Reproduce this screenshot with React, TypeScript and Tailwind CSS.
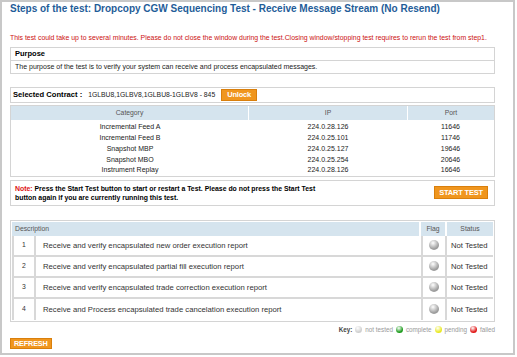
import React from "react";

const feeds = [
  { category: "Incremental Feed A", ip: "224.0.28.126", port: "11646" },
  { category: "Incremental Feed B", ip: "224.0.25.101", port: "11746" },
  { category: "Snapshot MBP", ip: "224.0.25.127", port: "19646" },
  { category: "Snapshot MBO", ip: "224.0.25.254", port: "20646" },
  { category: "Instrument Replay", ip: "224.0.28.126", port: "16646" },
];

const steps = [
  "Receive and verify encapsulated new order execution report",
  "Receive and verify encapsulated partial fill execution report",
  "Receive and verify encapsulated trade correction execution report",
  "Receive and Process encapsulated trade cancelation execution report",
];

function Ball({ color, size = 10 }: { color: string; size?: number }) {
  // small shaded sphere used for flags and key
  return (
    <span
      className="inline-block rounded-full shrink-0"
      style={{
        width: size,
        height: size,
        background: `radial-gradient(circle at 40% 30%, #ffffff 0%, ${color} 65%, ${color} 100%)`,
      }}
    />
  );
}

function OrangeButton({ children, className = "" }: { children: React.ReactNode; className?: string }) {
  return (
    <button
      className={`bg-[#f0961e] border border-[#d97f0c] text-white font-bold leading-none tracking-tight ${className}`}
    >
      {children}
    </button>
  );
}

export default function App() {
  return (
    <div className="w-[517px] h-[357px] bg-white font-['Liberation_Sans',Arial,sans-serif]">
      <div className="w-[515px] h-[355px] border-2 border-[#c8c8c8] px-[8px] overflow-hidden">
        <h1 className="text-[10px] font-bold text-[#1f5d99] leading-[14px] h-[17px]">
          Steps of the test: Dropcopy CGW Sequencing Test - Receive Message Stream (No Resend)
        </h1>

        <p className="mt-[14px] text-[6.9px] leading-[9px] text-[#cc1111] whitespace-nowrap">
          This test could take up to several minutes. Please do not close the window during the test.Closing window/stopping test requires to rerun the test from step1.
        </p>

        {/* Purpose */}
        <div className="mt-[5px] w-[485px] border border-[#d4d4d4]">
          <div className="h-[13px] px-[4px] flex items-center text-[7.5px] font-bold text-black border-b border-[#d4d4d4]">
            Purpose
          </div>
          <div className="h-[12px] px-[4px] flex items-center text-[7px] text-[#222]">
            The purpose of the test is to verify your system can receive and process encapsulated messages.
          </div>
        </div>

        {/* Selected contract */}
        <div className="mt-[13px] w-[485px] h-[16px] border border-[#d4d4d4] flex items-center px-[2px] gap-[4px]">
          <span className="text-[7.6px] font-bold text-black">Selected Contract :</span>
          <span className="text-[6.8px] text-[#222] ml-[2px]">1GLBU8,1GLBV8,1GLBU8-1GLBV8 - 845</span>
          <OrangeButton className="ml-[2px] h-[12px] px-[5px] text-[7.5px]">Unlock</OrangeButton>
        </div>

        {/* Feed table */}
        <div className="mt-[2px] w-[485px] border border-[#d4d4d4]">
          <div className="flex h-[14px] text-[6.8px] text-[#555] gap-[1px]">
            <div className="w-[237px] bg-[#d5e4ee] flex items-center justify-center">Category</div>
            <div className="w-[158px] bg-[#d5e4ee] flex items-center justify-center">IP</div>
            <div className="flex-1 bg-[#d5e4ee] flex items-center justify-center">Port</div>
          </div>
          <div className="pt-[2px]">
            {feeds.map((f) => (
              <div key={f.category} className="flex h-[10.8px] text-[7px] text-[#222] items-center">
                <div className="w-[238px] text-center">{f.category}</div>
                <div className="w-[158px] text-center">{f.ip}</div>
                <div className="flex-1 text-center">{f.port}</div>
              </div>
            ))}
          </div>
        </div>

        {/* Note */}
        <div className="mt-[3px] w-[485px] h-[26px] border border-[#d4d4d4] flex items-center justify-between pl-[4px] pr-[6px]">
          <p className="text-[6.9px] font-bold leading-[9px] text-black">
            <span className="text-[#dd1111]">Note:</span> Press the Start Test button to start or restart a Test. Please do not press the Start Test
            <br />
            button again if you are currently running this test.
          </p>
          <OrangeButton className="h-[13px] px-[4px] text-[7.5px]">START TEST</OrangeButton>
        </div>

        {/* Steps table */}
        <div className="mt-[14px] w-[485px] border border-[#d4d4d4] p-[1px]">
          <div className="flex h-[14px] text-[6.8px] text-[#555] gap-[2px]">
            <div className="flex-1 bg-[#d5e4ee] flex items-center pl-[3px]">Description</div>
            <div className="w-[24px] bg-[#d5e4ee] flex items-center justify-center">Flag</div>
            <div className="w-[46px] bg-[#d5e4ee] flex items-center justify-center">Status</div>
          </div>
          {steps.map((s, i) => (
            <div
              key={s}
              className="flex h-[21px] text-[7.7px] text-[#333] border-b-2 border-[#d8d8d8] last:border-b-0"
            >
              <div className="w-[24px] border-x-2 border-[#d8d8d8] flex items-center justify-center text-[6.8px]">
                {i + 1}
              </div>
              <div className="flex-1 flex items-center pl-[7px]">{s}</div>
              <div className="w-[26px] border-x-2 border-[#d8d8d8] flex items-center justify-center">
                <Ball color="#9c9c9c" />
              </div>
              <div className="w-[46px] flex items-center pl-[4px]">Not Tested</div>
            </div>
          ))}
        </div>

        {/* Key */}
        <div className="w-[485px] mt-[3px] flex items-center justify-end gap-[3px] text-[6.3px] text-[#999] h-[10px]">
          <span className="font-bold text-[#444]">Key:</span>
          <Ball color="#cfcfcf" size={7} />
          <span>not tested</span>
          <Ball color="#1a9a1a" size={7} />
          <span>complete</span>
          <Ball color="#e8e820" size={7} />
          <span>pending</span>
          <Ball color="#e01515" size={7} />
          <span>failed</span>
        </div>

        <div className="mt-[3px] flex">
          <OrangeButton className="h-[11px] px-[3px] text-[7.3px]">REFRESH</OrangeButton>
        </div>
      </div>
    </div>
  );
}
